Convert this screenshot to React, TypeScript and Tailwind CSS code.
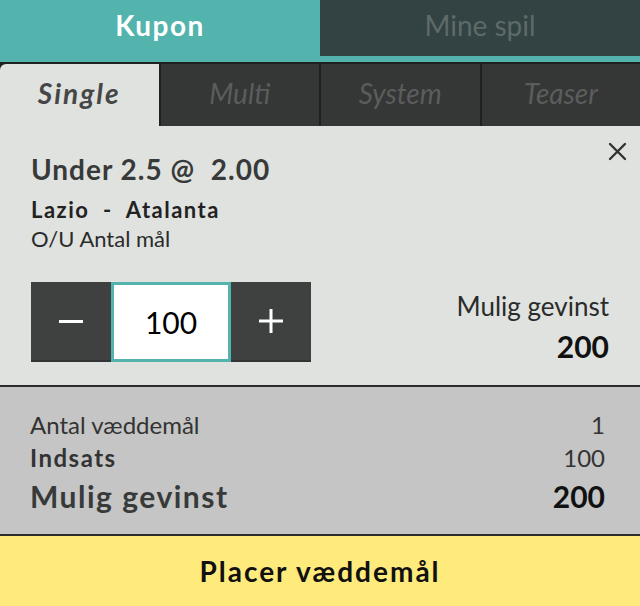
import { useState } from "react";

const font = { fontFamily: "Lato, 'Noto Sans', sans-serif" };

const subTabs = ["Single", "Multi", "System", "Teaser"];

export default function App() {
  const [stake, setStake] = useState(100);
  const odds = 2.0;
  const win = Math.round(stake * odds);

  return (
    <div className="w-[640px] h-[606px] flex flex-col bg-[#e0e2df] overflow-hidden" style={font}>
      {/* top tabs */}
      <div className="flex h-[56px] bg-[#52b4ad]">
        <div className="w-1/2 text-center text-white font-bold text-[28px] leading-[50px] tracking-[1.5px]">
          Kupon
        </div>
        <div className="w-1/2 bg-[#334243] text-center text-[#5e6a6a] text-[28px] leading-[50px]">
          Mine spil
        </div>
      </div>
      <div className="h-[6px] bg-[#52b4ad]" />

      {/* bet type tabs */}
      <div className="grid grid-cols-4 gap-[2px] bg-[#1f2020] pt-[2px]">
        {subTabs.map((t, i) => (
          <div
            key={t}
            className={
              i === 0
                ? "h-[62px] bg-[#e0e2df] rounded-tl-[6px] text-center italic font-bold text-[28px] leading-[58px] tracking-[2px] text-[#454747]"
                : "h-[62px] bg-[#353636] text-center italic text-[28px] leading-[58px] text-[#5b5d5d]"
            }
          >
            {t}
          </div>
        ))}
      </div>

      {/* selection */}
      <div className="relative px-[31px] pt-[26px] pb-[23px] border-b-2 border-[#2b2c2c]">
        <button className="absolute right-[13px] top-[15px] w-[20px] h-[20px] flex items-center justify-center">
          <svg width="19" height="19" viewBox="0 0 19 19">
            <path d="M2 2 L17 17 M17 2 L2 17" stroke="#333" strokeWidth="2.4" strokeLinecap="round" />
          </svg>
        </button>
        <div className="text-[28px] leading-[34px] font-bold text-[#383a3a] tracking-[1px]">
          Under 2.5 @&nbsp; 2.00
        </div>
        <div className="mt-[11px] text-[22px] leading-[26px] font-bold text-[#222] tracking-[1.5px]">
          Lazio&nbsp; -&nbsp; Atalanta
        </div>
        <div className="mt-[4px] text-[22px] leading-[24px] text-[#2a2b2b]">O/U Antal mål</div>

        <div className="mt-[31px] flex items-end justify-between">
          <div className="flex h-[80px]">
            <button
              onClick={() => setStake(Math.max(0, stake - 10))}
              className="w-[80px] h-[80px] bg-[#3f4140] border-b-2 border-[#333534] flex items-center justify-center"
            >
              <span className="block w-[24px] h-[3px] bg-white" />
            </button>
            <div className="w-[120px] h-[80px] bg-white border-[3px] border-[#52b4ad] flex items-center justify-center text-[30px] text-black">
              {stake}
            </div>
            <button
              onClick={() => setStake(stake + 10)}
              className="w-[80px] h-[80px] bg-[#3f4140] border-b-2 border-[#333534] flex items-center justify-center"
            >
              <svg width="24" height="24" viewBox="0 0 24 24">
                <path d="M12 0 V24 M0 12 H24" stroke="#fff" strokeWidth="3" />
              </svg>
            </button>
          </div>
          <div className="text-right">
            <div className="text-[26px] leading-[28px] text-[#2a2b2b]">Mulig gevinst</div>
            <div className="mt-[10px] text-[30px] leading-[32px] font-bold text-[#111]">{win}</div>
          </div>
        </div>
      </div>

      {/* summary */}
      <div className="bg-[#c4c5c4] pl-[30px] pr-[35px] pt-[25px] pb-[21px] border-b-2 border-[#2b2c2c]">
        <div className="flex justify-between text-[24px] leading-[26px] text-[#333]">
          <span>Antal væddemål</span>
          <span>1</span>
        </div>
        <div className="mt-[7px] flex justify-between text-[24px] leading-[26px] text-[#333]">
          <span className="font-bold tracking-[1.5px]">Indsats</span>
          <span>{stake}</span>
        </div>
        <div className="mt-[8px] flex justify-between text-[30px] leading-[34px] font-bold">
          <span className="text-[#383a3a] tracking-[1.5px]">Mulig gevinst</span>
          <span className="text-[#111]">{win}</span>
        </div>
      </div>

      {/* place bet */}
      <button className="flex-1 bg-[#feeb7c] text-center text-[28px] leading-[69px] font-bold text-[#111] tracking-[2px]">
        Placer væddemål
      </button>
    </div>
  );
}
